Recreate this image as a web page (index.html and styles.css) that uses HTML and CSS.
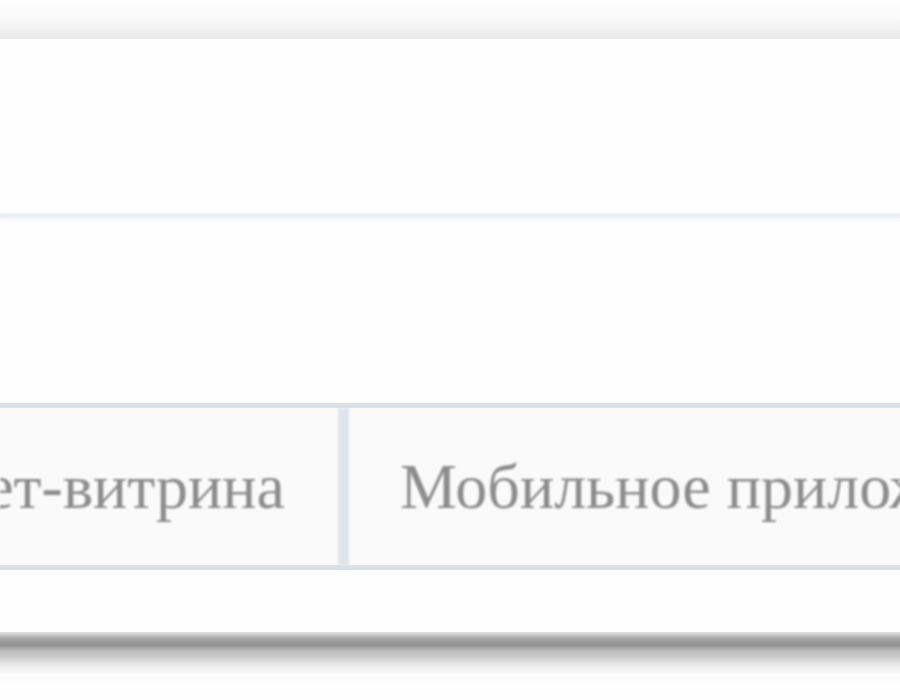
FILE: index.html
```html
<!DOCTYPE html>
<html lang="ru">
<head>
<meta charset="utf-8">
<title>Каналы продаж</title>
<link rel="stylesheet" href="styles.css">
</head>
<body>
<div class="page">
  <div class="top-shade"></div>
  <main class="panel">
    <section class="panel-head"></section>
    <section class="panel-body">
      <div class="tabs">
        <div class="tab tab-first">Интернет-витрина</div>
        <div class="tab tab-second">Мобильное приложение</div>
      </div>
    </section>
  </main>
  <div class="bottom-shade"></div>
</div>
</body>
</html>
```
FILE: styles.css
```css
html, body {
  margin: 0;
  padding: 0;
  background: #fefefe;
  overflow: hidden;
}

.page {
  width: 900px;
  height: 700px;
  display: flex;
  flex-direction: column;
  overflow: hidden;
}

.top-shade {
  height: 39px;
  flex: none;
  background: linear-gradient(to bottom, #fefefe 0px, #fbfbfb 16px, #f3f3f3 28px, #ebebeb 34px, #e9e9e9 39px);
}

.panel {
  height: 593px;
  flex: none;
  background: #fefefe;
  display: flex;
  flex-direction: column;
}

.panel-head {
  height: 174px;
  flex: none;
  border-bottom: 5px solid #edf1f5;
  box-shadow: 0 3px 3px #f6f7fa;
}

.panel-body {
  flex: 1;
  padding-top: 185px;
}

.tabs {
  display: flex;
  border-top: 5px solid #d9e1e8;
  border-bottom: 5px solid #d9e1e8;
  height: 157px;
  background: #fafafa;
  margin-right: -400px;
}

.tab {
  display: flex;
  align-items: center;
  font-family: "Liberation Serif", "Times New Roman", serif;
  font-size: 64px;
  color: #8c8c8c;
  white-space: nowrap;
  filter: blur(0.8px);
}

.tab-first {
  width: 338px;
  flex: none;
  justify-content: flex-end;
  padding-right: 53px;
  box-sizing: border-box;
  overflow: hidden;
}

.tab-second {
  flex: 1;
  padding-left: 51px;
  border-left: 11px solid #dde4eb;
}

.bottom-shade {
  height: 68px;
  flex: none;
  background: linear-gradient(to bottom, #e6e6e6 0px, #aaaaaa 6px, #909090 13px, #bbbbbb 19px, #cccccc 25px, #e0e0e0 30px, #f0f0f0 36px, #fafafa 42px, #fefefe 52px);
}
```
